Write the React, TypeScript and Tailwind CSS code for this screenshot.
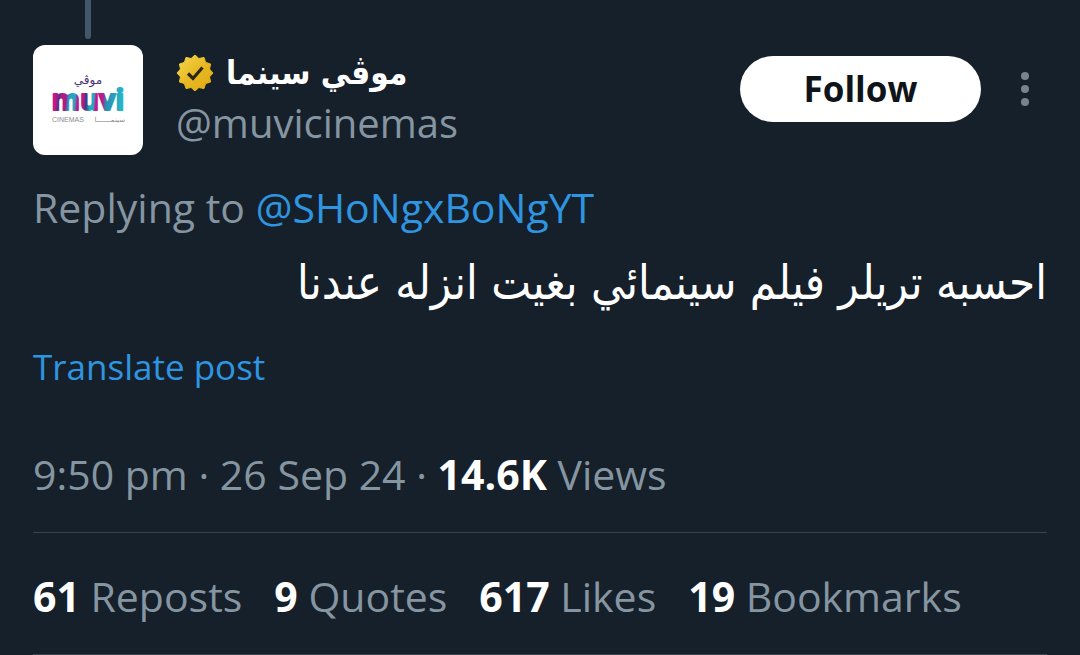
import type { ReactNode } from 'react'

const stats = [
	{ value: '61', label: 'Reposts' },
	{ value: '9', label: 'Quotes' },
	{ value: '617', label: 'Likes' },
	{ value: '19', label: 'Bookmarks' },
]

const BADGE_POINTS = Array.from({ length: 24 }, (_, i) => {
	const radius = i % 2 === 0 ? 18 : 15
	const angle = (i * Math.PI) / 12 - Math.PI / 2
	return `${(19 + radius * Math.cos(angle)).toFixed(1)},${(19 + radius * Math.sin(angle)).toFixed(1)}`
}).join(' ')

/**
 * Square company avatar with the muvi cinemas logo.
 */
const Avatar = () => (
	<svg viewBox="0 0 110 110" className="size-[110px] rounded-xl bg-white" role="img" aria-label="muvi cinemas">
		<defs>
			<linearGradient id="muvi" gradientUnits="userSpaceOnUse" x1="19" y1="0" x2="92" y2="6">
				<stop offset="0" stopColor="#c4168a" />
				<stop offset="0.11" stopColor="#c4168a" />
				<stop offset="0.15" stopColor="#5b2f83" />
				<stop offset="0.2" stopColor="#b01c88" />
				<stop offset="0.25" stopColor="#a31f88" />
				<stop offset="0.29" stopColor="#26a0c0" />
				<stop offset="0.37" stopColor="#26a9c4" />
				<stop offset="0.41" stopColor="#c0178a" />
				<stop offset="0.49" stopColor="#b01c88" />
				<stop offset="0.53" stopColor="#3f3a80" />
				<stop offset="0.58" stopColor="#25a8c2" />
				<stop offset="0.63" stopColor="#25a8c2" />
				<stop offset="0.66" stopColor="#c8188a" />
				<stop offset="0.75" stopColor="#b81c88" />
				<stop offset="0.8" stopColor="#2b8db0" />
				<stop offset="1" stopColor="#27b3c5" />
			</linearGradient>
		</defs>
		<text x="55" y="39" textAnchor="middle" className="fill-[#4c2f74] font-['DejaVu_Sans'] text-[12px]">
			موڤي
		</text>
		<text
			x="55"
			y="65"
			textAnchor="middle"
			fill="url(#muvi)"
			stroke="url(#muvi)"
			strokeWidth="2"
			strokeLinejoin="round"
			className="font-['Open_Sans'] text-[29px] font-bold"
		>
			muvi
		</text>
		<text x="19" y="77" className="fill-[#8b8b8d] font-['Liberation_Sans'] text-[7px]">
			CINEMAS
		</text>
		<text x="92" y="77" textAnchor="end" className="fill-[#8b8b8d] font-['DejaVu_Sans'] text-[7px]">
			سينمـــــــا
		</text>
	</svg>
)

const VerifiedBadge = () => (
	<svg viewBox="0 0 38 38" className="size-[38px]" role="img" aria-label="Verified">
		<defs>
			<linearGradient id="gold" x1="0" y1="0" x2="1" y2="1">
				<stop offset="0" stopColor="#f5d94f" />
				<stop offset="0.5" stopColor="#e8b923" />
				<stop offset="1" stopColor="#deaa12" />
			</linearGradient>
		</defs>
		<polygon points={BADGE_POINTS} fill="url(#gold)" stroke="url(#gold)" strokeWidth="1" strokeLinejoin="round" />
		<path d="M12 19.5 17 24.5 26.5 13.5" fill="none" stroke="#2a2714" strokeWidth="3.2" />
	</svg>
)

const Stat = ({ value, children }: { value: string; children: ReactNode }) => (
	<span>
		<b className="font-bold text-white">{value}</b> {children}
	</span>
)

const App = () => {
	return (
		<main className="min-h-screen bg-[#16202a] px-[33px] font-['Open_Sans','DejaVu_Sans',sans-serif] text-[41px] leading-[56px] text-[#8595a1]">
			{/* Thread line */}
			<div className="flex h-[45px] w-[110px] justify-center pb-1.5">
				<div className="w-1.5 rounded-b-full bg-[#425769]" />
			</div>

			{/* Author */}
			<header className="flex items-start">
				<Avatar />
				<div className="ml-[33px] flex-1">
					<div className="flex h-[56px] items-center gap-3">
						<VerifiedBadge />
						<h1
							dir="rtl"
							className="font-['DejaVu_Sans_Condensed','DejaVu_Sans',sans-serif] text-[33px] font-bold text-white"
						>
							موڤي سينما
						</h1>
					</div>
					<p className="text-[40px] leading-[44px]">@muvicinemas</p>
				</div>
				<button
					type="button"
					className="mt-[11px] h-[66px] w-[241px] rounded-full bg-white text-[35px] font-bold text-[#0f1419]"
				>
					Follow
				</button>
				<button
					type="button"
					aria-label="More"
					className="mt-[11px] ml-[22px] flex h-[66px] w-11 items-center justify-center"
				>
					<svg viewBox="0 0 8 34" className="h-[34px] w-2 fill-[#77838f]">
						<circle cx="4" cy="4" r="4" />
						<circle cx="4" cy="17" r="4" />
						<circle cx="4" cy="30" r="4" />
					</svg>
				</button>
			</header>

			{/* Post */}
			<p className="mt-6">
				Replying to{' '}
				<a href="#profile" className="text-[#2f95e0]">
					@SHoNgxBoNgYT
				</a>
			</p>
			<p
				dir="rtl"
				className="mt-5 font-['DejaVu_Sans_Condensed','DejaVu_Sans',sans-serif] text-[47px] text-white"
			>
				احسبه تريلر فيلم سينمائي بغيت انزله عندنا
			</p>
			<button type="button" className="mt-7 block text-[35px] text-[#2f95e0]">
				Translate post
			</button>
			<p className="mt-[51px]">
				9:50 pm · 26 Sep 24 · <Stat value="14.6K">Views</Stat>
			</p>

			{/* Counters */}
			<div className="mt-[30px] flex gap-8 border-y border-[#38444f] pt-[35px] pb-[30px] whitespace-nowrap">
				{stats.map(({ value, label }) => (
					<Stat key={label} value={value}>
						{label}
					</Stat>
				))}
			</div>
		</main>
	)
}

export default App
